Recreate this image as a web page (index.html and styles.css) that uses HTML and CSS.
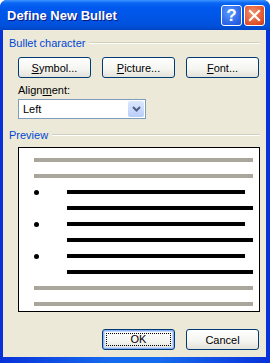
FILE: index.html
```html
<!DOCTYPE html>
<html lang="en">
<head>
    <meta charset="UTF-8">
    <title>Define New Bullet</title>
    <link rel="stylesheet" href="styles.css">
</head>
<body>
    <div class="window">
        <div class="titlebar">
            <span class="title">Define New Bullet</span>
            <div class="title-buttons">
                <span class="tbtn help">?</span>
                <span class="tbtn close">
                    <svg width="13" height="13" viewBox="0 0 13 13">
                        <path d="M2 2 L11 11 M11 2 L2 11" stroke="#fff" stroke-width="2.2" stroke-linecap="square"/>
                    </svg>
                </span>
            </div>
        </div>

        <div class="client">
            <div class="group-label"><span>Bullet character</span></div>
            <div class="btn-row">
                <button class="btn"><u>S</u>ymbol...</button>
                <button class="btn"><u>P</u>icture...</button>
                <button class="btn"><u>F</u>ont...</button>
            </div>

            <div class="field-label">Align<u>m</u>ent:</div>
            <div class="select">
                <span class="select-value">Left</span>
                <span class="drop">
                    <svg width="9" height="6" viewBox="0 0 9 6">
                        <path d="M1 1 L4.5 4.5 L8 1" fill="none" stroke="#4D6185" stroke-width="2"/>
                    </svg>
                </span>
            </div>

            <div class="group-label preview-label"><span>Preview</span></div>
            <div class="preview">
                <div class="row"><span class="line gray"></span></div>
                <div class="row"><span class="line gray"></span></div>
                <div class="row"><span class="dot"></span><span class="line black short"></span></div>
                <div class="row indent"><span class="line black"></span></div>
                <div class="row"><span class="dot"></span><span class="line black short"></span></div>
                <div class="row indent"><span class="line black"></span></div>
                <div class="row"><span class="dot"></span><span class="line black short"></span></div>
                <div class="row indent"><span class="line black"></span></div>
                <div class="row"><span class="line gray"></span></div>
                <div class="row"><span class="line gray"></span></div>
            </div>

            <div class="footer">
                <button class="btn default"><span class="focus">OK</span></button>
                <button class="btn">Cancel</button>
            </div>
        </div>
    </div>
</body>
</html>
```

FILE: styles.css
```css
body {
    margin: 0;
    background: #ffffff;
    font-family: "Liberation Sans", Arial, sans-serif;
}
.window {
    width: 270px;
    height: 363px;
    box-sizing: border-box;
    display: flex;
    flex-direction: column;
    background: linear-gradient(to right, #0831D9, #166AEE 40%, #166AEE 60%, #0831D9);
    border-radius: 7px 7px 0 0;
    padding: 0 4px 6px 3px;
}
.titlebar {
    height: 30px;
    margin: 0 -4px 0 -3px;
    padding: 0 5px 0 7px;
    display: flex;
    align-items: center;
    justify-content: space-between;
    border-radius: 7px 7px 0 0;
    background: linear-gradient(to bottom, #3D95FF 0, #0A66F2 3px, #0058EE 8px, #0055E5 18px, #0050DA 26px, #0046C6 30px);
}
.title {
    color: #ffffff;
    font-weight: bold;
    font-size: 13px;
    text-shadow: 1px 1px 0 #0A1883;
    padding-top: 1px;
}
.title-buttons {
    display: flex;
    gap: 2px;
    padding-top: 1px;
}
.tbtn {
    width: 21px;
    height: 21px;
    box-sizing: border-box;
    border: 1px solid #ffffff;
    border-radius: 3px;
    display: flex;
    align-items: center;
    justify-content: center;
    color: #ffffff;
}
.help {
    background: radial-gradient(circle at 40% 35%, #5A9AFF, #2A63E6 70%, #1C4FD0);
    font-size: 17px;
    font-weight: bold;
    line-height: 1;
}
.close {
    background: radial-gradient(circle at 40% 35%, #F0906A, #E2562E 65%, #C33A15);
}
.client {
    flex: 1;
    background: #ECE9D8;
    display: flex;
    flex-direction: column;
    padding: 6px 6px 0 6px;
    font-size: 11px;
    color: #000000;
}
.group-label {
    display: flex;
    align-items: center;
    gap: 4px;
    color: #0046D5;
    height: 13px;
}
.group-label::after {
    content: "";
    flex: 1;
    height: 1px;
    background: #D0D0BF;
    border-bottom: 1px solid #ffffff;
}
.btn-row {
    display: flex;
    gap: 11px;
    margin: 8px 0 0 9px;
}
.btn {
    width: 73px;
    height: 21px;
    box-sizing: border-box;
    padding: 0;
    border: 1px solid #003C74;
    border-radius: 3px;
    background: linear-gradient(to bottom, #FFFFFF, #F4F4F0 60%, #E3E2DA);
    font-family: "Liberation Sans", Arial, sans-serif;
    font-size: 11px;
    color: #000000;
}
.field-label {
    margin: 6px 0 0 9px;
    height: 13px;
}
.select {
    margin: 2px 0 0 9px;
    width: 128px;
    height: 20px;
    box-sizing: border-box;
    border: 1px solid #7F9DB9;
    background: #ffffff;
    display: flex;
    align-items: center;
    justify-content: space-between;
    padding: 1px;
}
.select-value {
    padding-left: 3px;
}
.drop {
    width: 16px;
    height: 16px;
    border-radius: 2px;
    background: linear-gradient(to bottom, #DDE8FE, #B9CDFB);
    display: flex;
    align-items: center;
    justify-content: center;
}
.preview-label {
    margin-top: 9px;
}
.preview {
    margin: 6px 0 0 9px;
    width: 242px;
    height: 165px;
    box-sizing: border-box;
    border: 1px solid #000000;
    background: #ffffff;
    padding: 10px 6px 0 15px;
    display: flex;
    flex-direction: column;
    gap: 12px;
}
.row {
    height: 4px;
    display: flex;
    align-items: center;
}
.indent {
    padding-left: 33px;
}
.line {
    height: 4px;
    flex: 1;
}
.gray {
    background: #A9A79B;
}
.black {
    background: #000000;
}
.short {
    flex: none;
    width: 178px;
}
.dot {
    width: 5px;
    height: 5px;
    border-radius: 50%;
    background: #000000;
    margin-right: 28px;
}
.footer {
    display: flex;
    justify-content: flex-end;
    gap: 11px;
    margin: 17px 1px 0 0;
}
.default {
    border-color: #003C74;
    box-shadow: inset 0 0 0 1px #8BB1F5, inset 0 0 0 2px #C4D6FB;
    padding: 3px;
}
.focus {
    display: block;
    height: 100%;
    box-sizing: border-box;
    border: 1px dotted #000000;
    line-height: 11px;
}
```
